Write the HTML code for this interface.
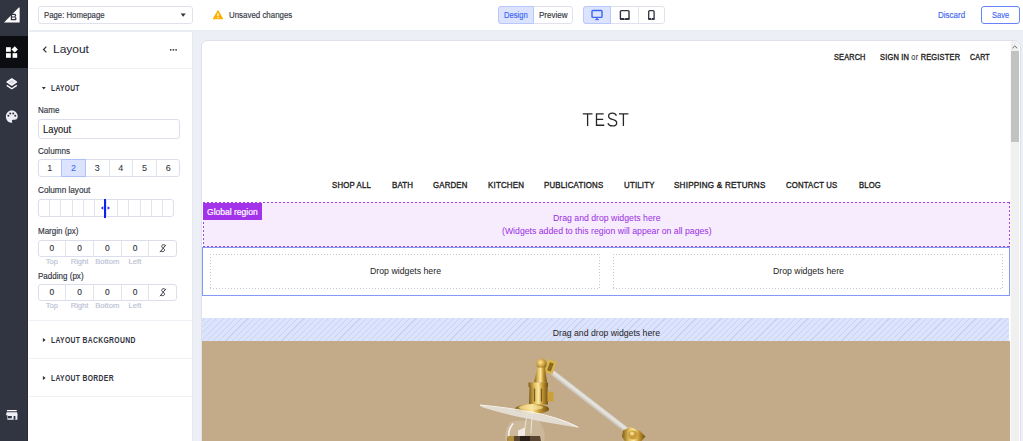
<!DOCTYPE html>
<html><head><meta charset="utf-8"><style>
*{box-sizing:border-box;margin:0;padding:0}
html,body{width:1023px;height:441px;overflow:hidden;background:#fff;font-family:"Liberation Sans",sans-serif;color:#313440}
.a{position:absolute}
.t{position:absolute;white-space:nowrap;line-height:1;transform-origin:0 0;-webkit-text-stroke:0.15px currentColor}
.sep{position:absolute;left:29px;width:163px;height:1px;background:#eff0f5}
.box{position:absolute;border:1px solid #dcdfeb;border-radius:3px;background:#fff}
</style></head><body>
<div class="a" style="left:0;top:0;width:28px;height:441px;background:#313441"></div>
<div class="a" style="left:0;top:36px;width:28px;height:32px;background:#0c0d11"></div>
<div class="a" style="left:26.5px;top:68px;width:1.5px;height:373px;background:#2a2c37"></div>
<div class="a" style="left:26.5px;top:0;width:1.5px;height:36px;background:#2a2c37"></div>
<svg class="a" style="left:0;top:0" width="28" height="36" viewBox="0 0 28 36">
<path d="M4 22.6 L18.8 7.6 L19.6 7.4 L19.6 22.6 Z" fill="#fff"/>
<path d="M10.8 13.8 L14.6 13.8 C16.4 13.8 16.7 16.4 15.3 16.9 C17.1 17.3 17 20.3 14.8 20.3 L10.8 20.3 Z M12.1 15 L12.1 16.4 L14.3 16.4 C15.2 16.4 15.2 15 14.3 15 Z M12.1 17.6 L12.1 19.1 L14.5 19.1 C15.5 19.1 15.5 17.6 14.5 17.6 Z" fill="#313441" fill-rule="evenodd"/></svg>
<svg class="a" style="left:0;top:36px" width="28" height="32" viewBox="0 0 28 32">
<rect x="6" y="11.2" width="4.8" height="4.6" fill="#fff"/>
<rect x="6" y="17.2" width="4.8" height="4.6" fill="#fff"/>
<rect x="12.6" y="17.2" width="4.6" height="4.6" fill="#fff"/>
<path d="M14.7 10.2 L17.9 13.4 L14.7 16.6 L11.5 13.4 Z" fill="#fff"/></svg>
<svg class="a" style="left:0;top:72px" width="28" height="24" viewBox="0 0 28 24">
<path d="M11.8 6.9 L16.6 10 L11.8 13.1 L7 10 Z" fill="#d8dbe6" stroke="#fff" stroke-width="1.3" stroke-linejoin="round"/>
<path d="M6.8 13.4 L11.8 16.7 L16.8 13.4" fill="none" stroke="#fff" stroke-width="1.3" stroke-linejoin="round"/></svg>
<svg class="a" style="left:0;top:104px" width="28" height="24" viewBox="0 0 28 24">
<path d="M11.8 6.5 C8.3 6.5 5.9 9.1 5.9 12.6 C5.9 16.3 8.6 18.8 11.2 18.8 C12.3 18.8 12.5 18.1 12.1 17.4 C11.6 16.6 12.1 15.8 13 15.8 L14.6 15.8 C16.5 15.8 17.7 14.7 17.7 12.6 C17.7 9.1 15.2 6.5 11.8 6.5 Z" fill="#eceef3"/>
<circle cx="8.4" cy="11.8" r="1" fill="#313441"/><circle cx="10.2" cy="9.4" r="1" fill="#313441"/>
<circle cx="13.2" cy="9.4" r="1" fill="#313441"/><circle cx="15.2" cy="11.8" r="1" fill="#313441"/></svg>
<svg class="a" style="left:0;top:404px" width="28" height="20" viewBox="0 0 28 20">
<rect x="6.8" y="5.9" width="10" height="1.4" rx="0.5" fill="#fff"/>
<path d="M6.6 8.2 L17 8.2 L17.8 11.2 L17.4 11.2 L17.4 15.7 L7.4 15.7 L7.4 11.2 L6 11.2 Z" fill="#eef0f5"/>
<rect x="7.9" y="12" width="3.9" height="2.3" fill="#313441"/>
<rect x="13.6" y="12" width="1.8" height="3.7" fill="#313441"/></svg>
<div class="a" style="left:29px;top:30px;width:994px;height:1.6px;background:#eaecf3"></div>
<div class="a" style="left:193px;top:31px;width:830px;height:410px;background:#edeff6"></div>
<div class="a" style="left:192px;top:31px;width:1px;height:410px;background:#e6e8f0"></div>
<div class="box" style="left:38px;top:6px;width:155px;height:17.5px;border-color:#dfe2ec"></div>
<svg class="a" style="left:180px;top:12.5px" width="7" height="5"><path d="M0.6 0.5 L5.8 0.5 L3.2 3.8 Z" fill="#313440"/></svg>
<svg class="a" style="left:212px;top:10px" width="12" height="10" viewBox="0 0 12 10"><path d="M6 0.9 L10.6 8.7 L1.4 8.7 Z" fill="#ffae00" stroke="#ffae00" stroke-width="1.1" stroke-linejoin="round"/><rect x="5.35" y="3.4" width="1.3" height="2.8" fill="#fff"/><rect x="5.35" y="7" width="1.3" height="1.1" fill="#fff"/></svg>
<div class="box" style="left:497.5px;top:6px;width:75.5px;height:17.5px;border-color:#dfe2ec"></div>
<div class="a" style="left:497.5px;top:6px;width:36.5px;height:17.5px;background:#dbe3fe;border:1px solid #b9c8fb;border-radius:3px 0 0 3px"></div>
<div class="box" style="left:583px;top:6px;width:82px;height:17.5px;border-color:#dfe2ec"></div>
<div class="a" style="left:583px;top:6px;width:28px;height:17.5px;background:#dbe3fe;border:1px solid #b9c8fb;border-radius:3px 0 0 3px"></div>
<div class="a" style="left:638px;top:7px;width:1px;height:15.5px;background:#e3e5ee"></div>
<svg class="a" style="left:590px;top:9px" width="14" height="12" viewBox="0 0 14 12"><rect x="2" y="1.5" width="10" height="6.9" rx="0.8" fill="none" stroke="#3c64f4" stroke-width="1.4"/><path d="M5.6 10.4 L7 8.6 L8.4 10.4 Z" fill="#3c64f4"/><rect x="5" y="10.2" width="4" height="0.9" fill="#3c64f4"/></svg>
<svg class="a" style="left:618px;top:9px" width="13" height="12" viewBox="0 0 13 12"><path d="M3.2 1.6 L10.2 1.6 Q11 1.6 11 2.4 L11 9.6 Q11 10.4 10.2 10.4 L3.2 10.4 Q2.4 10.4 2.4 9.6 L2.4 2.4 Q2.4 1.6 3.2 1.6 Z" fill="none" stroke="#313440" stroke-width="1.4"/><rect x="2" y="9" width="9.4" height="1.9" rx="0.6" fill="#313440"/><rect x="6.3" y="9.2" width="0.8" height="1.2" fill="#fff"/></svg>
<svg class="a" style="left:646px;top:9px" width="10" height="12" viewBox="0 0 10 12"><rect x="2.7" y="1.6" width="5.4" height="8.8" rx="1.1" fill="none" stroke="#313440" stroke-width="1.3"/><rect x="2.2" y="9" width="6.4" height="1.9" rx="0.6" fill="#313440"/><rect x="5" y="9.2" width="0.8" height="1.2" fill="#fff"/></svg>
<div class="a" style="left:980.5px;top:6px;width:39.5px;height:17.8px;border:1px solid #6484f8;border-radius:3px"></div>
<svg class="a" style="left:42px;top:46px" width="6" height="7" viewBox="0 0 6 7"><path d="M4.4 0.6 L1.5 3.5 L4.4 6.4" fill="none" stroke="#313440" stroke-width="1.25"/></svg>
<svg class="a" style="left:168px;top:47px" width="10" height="6"><circle cx="2.7" cy="2.8" r="0.9" fill="#313440"/><circle cx="5.4" cy="2.8" r="0.9" fill="#313440"/><circle cx="8.1" cy="2.8" r="0.9" fill="#313440"/></svg>
<div class="sep" style="top:68px"></div>
<svg class="a" style="left:41px;top:86px" width="6" height="5"><path d="M0.8 0.9 L4.8 0.9 L2.8 3.5 Z" fill="#313440"/></svg>
<div class="box" style="left:38px;top:119px;width:142px;height:20px"></div>
<div class="box" style="left:38px;top:159px;width:142px;height:18px"></div>
<div class="a" style="left:61.17px;top:160px;width:1px;height:16px;background:#e3e5ee"></div>
<div class="a" style="left:84.83px;top:160px;width:1px;height:16px;background:#e3e5ee"></div>
<div class="a" style="left:108.50px;top:160px;width:1px;height:16px;background:#e3e5ee"></div>
<div class="a" style="left:132.17px;top:160px;width:1px;height:16px;background:#e3e5ee"></div>
<div class="a" style="left:155.83px;top:160px;width:1px;height:16px;background:#e3e5ee"></div>
<div class="a" style="left:61.17px;top:159px;width:24.67px;height:18px;background:#dbe3fe;border:1px solid #b1c0f8"></div>
<div class="t" style="left:47.33px;top:164px;font-size:9px;color:#313440;-webkit-text-stroke:0.05px currentColor">1</div>
<div class="t" style="left:71.00px;top:164px;font-size:9px;color:#3c64f4;-webkit-text-stroke:0.05px currentColor">2</div>
<div class="t" style="left:94.67px;top:164px;font-size:9px;color:#313440;-webkit-text-stroke:0.05px currentColor">3</div>
<div class="t" style="left:118.33px;top:164px;font-size:9px;color:#313440;-webkit-text-stroke:0.05px currentColor">4</div>
<div class="t" style="left:142.00px;top:164px;font-size:9px;color:#313440;-webkit-text-stroke:0.05px currentColor">5</div>
<div class="t" style="left:165.67px;top:164px;font-size:9px;color:#313440;-webkit-text-stroke:0.05px currentColor">6</div>
<div class="box" style="left:38px;top:199px;width:136px;height:18px"></div>
<div class="a" style="left:48.83px;top:200px;width:1px;height:16px;background:#e3e5ee"></div>
<div class="a" style="left:60.17px;top:200px;width:1px;height:16px;background:#e3e5ee"></div>
<div class="a" style="left:71.50px;top:200px;width:1px;height:16px;background:#e3e5ee"></div>
<div class="a" style="left:82.83px;top:200px;width:1px;height:16px;background:#e3e5ee"></div>
<div class="a" style="left:94.17px;top:200px;width:1px;height:16px;background:#e3e5ee"></div>
<div class="a" style="left:105.50px;top:200px;width:1px;height:16px;background:#e3e5ee"></div>
<div class="a" style="left:116.83px;top:200px;width:1px;height:16px;background:#e3e5ee"></div>
<div class="a" style="left:128.17px;top:200px;width:1px;height:16px;background:#e3e5ee"></div>
<div class="a" style="left:139.50px;top:200px;width:1px;height:16px;background:#e3e5ee"></div>
<div class="a" style="left:150.83px;top:200px;width:1px;height:16px;background:#e3e5ee"></div>
<div class="a" style="left:162.17px;top:200px;width:1px;height:16px;background:#e3e5ee"></div>
<div class="a" style="left:104.4px;top:199px;width:1.8px;height:18.5px;background:#0b22f2"></div>
<svg class="a" style="left:100px;top:205px" width="12" height="6"><path d="M0.9 3 L3.3 1.3 L3.3 4.7 Z M10 3 L7.6 1.3 L7.6 4.7 Z" fill="#0a2cf0"/></svg>
<div class="box" style="left:38px;top:239.5px;width:138.5px;height:17.5px"></div>
<div class="a" style="left:65.20px;top:240.5px;width:1px;height:15.5px;background:#e3e5ee"></div>
<div class="a" style="left:92.90px;top:240.5px;width:1px;height:15.5px;background:#e3e5ee"></div>
<div class="a" style="left:120.60px;top:240.5px;width:1px;height:15.5px;background:#e3e5ee"></div>
<div class="a" style="left:148.30px;top:240.5px;width:1px;height:15.5px;background:#e3e5ee"></div>
<div class="t" style="left:49.55px;top:243.76px;font-size:8.4px;color:#313440">0</div>
<div class="t" style="left:77.25px;top:243.76px;font-size:8.4px;color:#313440">0</div>
<div class="t" style="left:104.95px;top:243.76px;font-size:8.4px;color:#313440">0</div>
<div class="t" style="left:132.65px;top:243.76px;font-size:8.4px;color:#313440">0</div>
<svg class="a" style="left:158.65px;top:244.1px" width="8" height="9" viewBox="0 0 8 9" fill="none" stroke="#313440" stroke-width="0.95"><path d="M6.2 1.6 C5.6 0.5 3.6 0.4 2.9 1.5 C2.3 2.5 3 3.5 4 4.1 C5.2 4.8 5.8 5.6 5.3 6.8 C4.7 8 2.8 8 2 7"/><path d="M0.9 8.2 L6.9 0.9"/></svg>
<div class="t" id="lb239.5_0" style="left:51.85px;top:258.18px;font-size:7.6px;color:#bcc2d6;transform:translateX(-50%)">Top</div>
<div class="t" id="lb239.5_1" style="left:79.55px;top:258.18px;font-size:7.6px;color:#bcc2d6;transform:translateX(-50%)">Right</div>
<div class="t" id="lb239.5_2" style="left:107.25px;top:258.18px;font-size:7.6px;color:#bcc2d6;transform:translateX(-50%)">Bottom</div>
<div class="t" id="lb239.5_3" style="left:134.95px;top:258.18px;font-size:7.6px;color:#bcc2d6;transform:translateX(-50%)">Left</div>
<div class="box" style="left:38px;top:283.6px;width:138.5px;height:17.5px"></div>
<div class="a" style="left:65.20px;top:284.6px;width:1px;height:15.5px;background:#e3e5ee"></div>
<div class="a" style="left:92.90px;top:284.6px;width:1px;height:15.5px;background:#e3e5ee"></div>
<div class="a" style="left:120.60px;top:284.6px;width:1px;height:15.5px;background:#e3e5ee"></div>
<div class="a" style="left:148.30px;top:284.6px;width:1px;height:15.5px;background:#e3e5ee"></div>
<div class="t" style="left:49.55px;top:287.86px;font-size:8.4px;color:#313440">0</div>
<div class="t" style="left:77.25px;top:287.86px;font-size:8.4px;color:#313440">0</div>
<div class="t" style="left:104.95px;top:287.86px;font-size:8.4px;color:#313440">0</div>
<div class="t" style="left:132.65px;top:287.86px;font-size:8.4px;color:#313440">0</div>
<svg class="a" style="left:158.65px;top:288.20000000000005px" width="8" height="9" viewBox="0 0 8 9" fill="none" stroke="#313440" stroke-width="0.95"><path d="M6.2 1.6 C5.6 0.5 3.6 0.4 2.9 1.5 C2.3 2.5 3 3.5 4 4.1 C5.2 4.8 5.8 5.6 5.3 6.8 C4.7 8 2.8 8 2 7"/><path d="M0.9 8.2 L6.9 0.9"/></svg>
<div class="t" id="lb283.6_0" style="left:51.85px;top:302.18px;font-size:7.6px;color:#bcc2d6;transform:translateX(-50%)">Top</div>
<div class="t" id="lb283.6_1" style="left:79.55px;top:302.18px;font-size:7.6px;color:#bcc2d6;transform:translateX(-50%)">Right</div>
<div class="t" id="lb283.6_2" style="left:107.25px;top:302.18px;font-size:7.6px;color:#bcc2d6;transform:translateX(-50%)">Bottom</div>
<div class="t" id="lb283.6_3" style="left:134.95px;top:302.18px;font-size:7.6px;color:#bcc2d6;transform:translateX(-50%)">Left</div>
<div class="sep" style="top:320px"></div>
<svg class="a" style="left:42px;top:337px" width="5" height="6"><path d="M0.9 0.9 L3.7 3 L0.9 5.1 Z" fill="#313440"/></svg>
<div class="sep" style="top:358px"></div>
<svg class="a" style="left:42px;top:375px" width="5" height="6"><path d="M0.9 0.9 L3.7 3 L0.9 5.1 Z" fill="#313440"/></svg>
<div class="sep" style="top:396px"></div>
<div class="a" style="left:202px;top:41px;width:817.5px;height:400px;background:#fff;border-radius:5px 6px 0 0;box-shadow:0 0 0 1px #dfe1ea"></div>
<div class="a" style="left:1010px;top:41px;width:9.3px;height:400px;background:#eff0ef;border-radius:0 6px 0 0;border-left:1px solid #fafafa"></div>
<svg class="a" style="left:1010px;top:43px" width="10" height="8"><path d="M2.4 5.2 L4.75 3 L7.1 5.2" fill="none" stroke="#6a6a6a" stroke-width="1"/></svg>
<div class="a" style="left:1010.8px;top:51px;width:8.2px;height:91px;background:#c2c2c2"></div>
<div class="a" style="left:202.5px;top:202px;width:807.5px;height:45px;background-color:#f6ecfd;background-image:repeating-linear-gradient(90deg,#a445e6 0 2px,transparent 2px 4px),repeating-linear-gradient(90deg,#a445e6 0 2px,transparent 2px 4px),repeating-linear-gradient(180deg,#a445e6 0 2px,transparent 2px 4px),repeating-linear-gradient(180deg,#a445e6 0 2px,transparent 2px 4px);background-size:100% 1px,100% 1px,1px 100%,1px 100%;background-position:0 0,0 100%,0 0,100% 0;background-repeat:no-repeat"></div>
<div class="a" style="left:202.5px;top:202.5px;width:59.5px;height:17.2px;background:#a233ea"></div>
<div class="a" style="left:202px;top:247px;width:808px;height:49px;border:1px solid #8399f3;background:#fff"></div>
<div class="a" style="left:210px;top:254px;width:390px;height:34.5px;background-color:transparent;background-image:repeating-linear-gradient(90deg,#c3c6d5 0 1.5px,transparent 1.5px 3.0px),repeating-linear-gradient(90deg,#c3c6d5 0 1.5px,transparent 1.5px 3.0px),repeating-linear-gradient(180deg,#c3c6d5 0 1.5px,transparent 1.5px 3.0px),repeating-linear-gradient(180deg,#c3c6d5 0 1.5px,transparent 1.5px 3.0px);background-size:100% 1px,100% 1px,1px 100%,1px 100%;background-position:0 0,0 100%,0 0,100% 0;background-repeat:no-repeat"></div>
<div class="a" style="left:612.5px;top:254px;width:390.5px;height:34.5px;background-color:transparent;background-image:repeating-linear-gradient(90deg,#c3c6d5 0 1.5px,transparent 1.5px 3.0px),repeating-linear-gradient(90deg,#c3c6d5 0 1.5px,transparent 1.5px 3.0px),repeating-linear-gradient(180deg,#c3c6d5 0 1.5px,transparent 1.5px 3.0px),repeating-linear-gradient(180deg,#c3c6d5 0 1.5px,transparent 1.5px 3.0px);background-size:100% 1px,100% 1px,1px 100%,1px 100%;background-position:0 0,0 100%,0 0,100% 0;background-repeat:no-repeat"></div>
<div class="a" style="left:202.4px;top:318px;width:807.1px;height:22.5px;background-color:#dce3fd;background-image:repeating-linear-gradient(-45deg, transparent 0 3.6px, #cad1f1 3.6px 4.4px)"></div>
<div class="a" style="left:202.4px;top:340.5px;width:807.6px;height:101px;background:#c3aa88;overflow:hidden"></div>
<svg class="a" style="left:203px;top:340.5px" width="807" height="101" viewBox="203 340.5 807 101">
<defs>
<linearGradient id="br" x1="0" x2="1" y1="0" y2="0"><stop offset="0" stop-color="#7d5c16"/><stop offset="0.3" stop-color="#e3bd5c"/><stop offset="0.5" stop-color="#fbe9a0"/><stop offset="0.72" stop-color="#c49530"/><stop offset="1" stop-color="#6e5012"/></linearGradient>
<radialGradient id="ball" cx="0.4" cy="0.35" r="0.7"><stop offset="0" stop-color="#fbe7a0"/><stop offset="0.5" stop-color="#d2a640"/><stop offset="1" stop-color="#7a5a18"/></radialGradient>
</defs>
<path d="M553 372.5 L626 429" stroke="#cdc9c0" stroke-width="5.4" stroke-linecap="round"/>
<path d="M552.6 371.5 L625.6 428" stroke="#e4e1db" stroke-width="3" stroke-linecap="round"/>
<g transform="rotate(20 550 366)"><path d="M545.5 359.5 L555 359.5 L555 373 L545.5 373 Z" fill="#d9b453"/><path d="M548.5 362 L552.5 362 L552.5 370.5 L548.5 370.5 Z" fill="#8a6a1e"/></g>
<circle cx="541.5" cy="363.5" r="5.2" fill="url(#ball)"/>
<path d="M537.5 367 L545 367 L547 382 L534 382 Z" fill="url(#br)"/>
<path d="M528.5 382 L548 382 L548 386.5 L528.5 386.5 Z" fill="url(#br)"/>
<path d="M529.5 386 L547.5 386 L548 404 L529 404 Z" fill="url(#br)"/>
<path d="M534.5 388 L534.5 401 M541.5 388 L541.5 401" stroke="#5a4210" stroke-width="1.3" opacity="0.75"/>
<path d="M547.5 391 L553.5 391.5 L553.5 401 L547.5 401 Z" fill="#c9a03a"/>
<ellipse cx="532" cy="408.5" rx="17" ry="5" fill="url(#br)"/>
<ellipse cx="531" cy="407" rx="12" ry="2.4" fill="#f7e3a0" opacity="0.7"/>
<path d="M511 421 C505 428 504 436 506 441 L544 441 C546 434 544 426 538 419 Z" fill="#d8ccb6" opacity="0.45"/>
<path d="M513 423 C509 428 508 433 509 438" stroke="#fff" stroke-width="1.6" fill="none" opacity="0.85"/>
<path d="M518 430 L525 427 L525 435 L518 437 Z" fill="#fff" opacity="0.7"/>
<path d="M527 414 L524 433 M532 414 L531 433" stroke="#f2f0ec" stroke-width="0.8"/>
<path d="M508 435.5 L540 435.5 L541 441 L507 441 Z" fill="#5a4630"/>
<path d="M508 435.5 L514 435.5 L514 441 L507 441 Z" fill="#b08c3c"/>
<path d="M520 435.5 L530 435.5 L530 441 L520 441 Z" fill="#2a2018"/>
<path d="M480 404.5 C512 408 556 414 580 427.5 C556 423 512 417 481 406.2 Z" fill="#e9e5dd" opacity="0.85"/>
<path d="M480 404.5 C512 407.6 552 412.6 578 426.6" stroke="#fbfaf7" stroke-width="0.9" fill="none"/>
<path d="M623 430 L630 426.5 L640 430.5 L645.5 436 L641 441 L625 441 L622 436 Z" fill="url(#br)"/>
<circle cx="633" cy="434.5" r="4.6" fill="#c99d3a"/>
<circle cx="632" cy="433" r="2" fill="#f0d98a"/>
</svg>
<svg class="a" style="left:578px;top:108px" width="56" height="24" viewBox="578 108 56 24" fill="none" stroke="#262626" stroke-width="1.3">
<path d="M582.8 113.9 L592.5 113.9 M587.6 113.9 L587.6 125.9"/>
<path d="M603.7 113.9 L596.5 113.9 L596.5 125.25 L604.3 125.25 M596.5 119.4 L603.2 119.4"/>
<path d="M616.4 115.8 C615.8 114.1 614.2 113.2 612.3 113.2 C610 113.2 608.6 114.5 608.6 116.3 C608.6 118.2 610.2 118.9 612.4 119.4 C615 120 616.7 120.9 616.7 122.9 C616.7 124.8 615 125.9 612.3 125.9 C610.2 125.9 608.5 124.9 607.9 123.2"/>
<path d="M619 113.9 L628.4 113.9 M623.4 113.9 L623.4 125.9"/>
</svg>
<div class="t" id="pg" style="left:44.00px;top:11px;font-size:9.2px;color:#313440;transform:scaleX(0.8472);">Page: Homepage</div>
<div class="t" id="uns" style="left:229.30px;top:11px;font-size:9.2px;color:#313440;transform:scaleX(0.8608);">Unsaved changes</div>
<div class="t" id="des" style="left:504.00px;top:11px;font-size:9.2px;color:#3c64f4;transform:scaleX(0.8276);">Design</div>
<div class="t" id="pre" style="left:538.70px;top:11px;font-size:9.2px;color:#313440;transform:scaleX(0.8758);">Preview</div>
<div class="t" id="dis" style="left:938.00px;top:11px;font-size:9.2px;color:#3c64f4;transform:scaleX(0.8710);">Discard</div>
<div class="t" id="sav" style="left:991.70px;top:11px;font-size:9.2px;color:#3c64f4;transform:scaleX(0.8143);">Save</div>
<div class="t" id="ttl" style="left:52.95px;top:44px;font-size:11.4px;color:#272a36;-webkit-text-stroke:0.05px currentColor;transform:scaleX(1.0485);">Layout</div>
<div class="t" id="h1" style="left:50.80px;top:84px;font-size:8.4px;color:#313440;font-weight:bold;-webkit-text-stroke:0;letter-spacing:0.4px;transform:scaleX(0.7972);">LAYOUT</div>
<div class="t" id="nm" style="left:38.20px;top:106px;font-size:8.4px;color:#313440;transform:scaleX(0.9545);">Name</div>
<div class="t" id="inp" style="left:43.40px;top:125px;font-size:10.2px;color:#1a1c24;transform:scaleX(0.9194);">Layout</div>
<div class="t" id="col" style="left:38.20px;top:147px;font-size:8.4px;color:#313440;transform:scaleX(0.9667);">Columns</div>
<div class="t" id="cll" style="left:38.20px;top:186px;font-size:8.4px;color:#313440;transform:scaleX(0.9778);">Column layout</div>
<div class="t" id="mg" style="left:38.20px;top:227px;font-size:8.4px;color:#313440;transform:scaleX(0.9548);">Margin (px)</div>
<div class="t" id="pd" style="left:38.20px;top:272px;font-size:8.4px;color:#313440;transform:scaleX(0.9596);">Padding (px)</div>
<div class="t" id="h2" style="left:50.50px;top:336px;font-size:8.4px;color:#313440;font-weight:bold;-webkit-text-stroke:0;letter-spacing:0.4px;transform:scaleX(0.8125);">LAYOUT BACKGROUND</div>
<div class="t" id="h3" style="left:50.50px;top:374px;font-size:8.4px;color:#313440;font-weight:bold;-webkit-text-stroke:0;letter-spacing:0.4px;transform:scaleX(0.8117);">LAYOUT BORDER</div>
<div class="t" id="srch" style="left:834.30px;top:54px;font-size:8.2px;color:#222;-webkit-text-stroke:0.35px currentColor;letter-spacing:0.2px;transform:scaleX(0.8943);">SEARCH</div>
<div class="t" id="sign" style="left:880.00px;top:54px;font-size:8.2px;color:#222;-webkit-text-stroke:0.35px currentColor;letter-spacing:0.2px;transform:scaleX(0.9125);">SIGN IN <span style="-webkit-text-stroke:0">or</span> REGISTER</div>
<div class="t" id="cart" style="left:970.20px;top:54px;font-size:8.2px;color:#222;-webkit-text-stroke:0.35px currentColor;letter-spacing:0.2px;transform:scaleX(0.8609);">CART</div>
<div class="t" id="nav0" style="left:332.30px;top:181px;font-size:8.6px;color:#222;-webkit-text-stroke:0.35px currentColor;letter-spacing:0.2px;transform:scaleX(0.9070);">SHOP ALL</div>
<div class="t" id="nav1" style="left:391.80px;top:181px;font-size:8.6px;color:#222;-webkit-text-stroke:0.35px currentColor;letter-spacing:0.2px;transform:scaleX(0.9217);">BATH</div>
<div class="t" id="nav2" style="left:432.90px;top:181px;font-size:8.6px;color:#222;-webkit-text-stroke:0.35px currentColor;letter-spacing:0.2px;transform:scaleX(0.9105);">GARDEN</div>
<div class="t" id="nav3" style="left:487.70px;top:181px;font-size:8.6px;color:#222;-webkit-text-stroke:0.35px currentColor;letter-spacing:0.2px;transform:scaleX(0.9256);">KITCHEN</div>
<div class="t" id="nav4" style="left:544.30px;top:181px;font-size:8.6px;color:#222;-webkit-text-stroke:0.35px currentColor;letter-spacing:0.2px;transform:scaleX(0.9169);">PUBLICATIONS</div>
<div class="t" id="nav5" style="left:624.00px;top:181px;font-size:8.6px;color:#222;-webkit-text-stroke:0.35px currentColor;letter-spacing:0.2px;transform:scaleX(0.9182);">UTILITY</div>
<div class="t" id="nav6" style="left:674.20px;top:181px;font-size:8.6px;color:#222;-webkit-text-stroke:0.35px currentColor;letter-spacing:0.2px;transform:scaleX(0.9464);">SHIPPING &amp; RETURNS</div>
<div class="t" id="nav7" style="left:786.20px;top:181px;font-size:8.6px;color:#222;-webkit-text-stroke:0.35px currentColor;letter-spacing:0.2px;transform:scaleX(0.9000);">CONTACT US</div>
<div class="t" id="nav8" style="left:858.70px;top:181px;font-size:8.6px;color:#222;-webkit-text-stroke:0.35px currentColor;letter-spacing:0.2px;transform:scaleX(0.8875);">BLOG</div>
<div class="t" id="glob" style="left:207.00px;top:208px;font-size:8.7px;color:#fff;-webkit-text-stroke:0.2px currentColor;transform:scaleX(0.9808);">Global region</div>
<div class="t" id="dd1" style="left:552.80px;top:214px;font-size:8.7px;color:#9a2de4;-webkit-text-stroke:0;transform:scaleX(1.0028);">Drag and drop widgets here</div>
<div class="t" id="dd2" style="left:501.50px;top:227px;font-size:8.7px;color:#9a2de4;-webkit-text-stroke:0;transform:scaleX(1.0024);">(Widgets added to this region will appear on all pages)</div>
<div class="t" id="dw1" style="left:369.60px;top:267px;font-size:8.7px;color:#242424;-webkit-text-stroke:0;transform:scaleX(1.0071);">Drop widgets here</div>
<div class="t" id="dw2" style="left:772.60px;top:267px;font-size:8.7px;color:#242424;-webkit-text-stroke:0;transform:scaleX(1.0057);">Drop widgets here</div>
<div class="t" id="dd3" style="left:552.80px;top:329px;font-size:8.7px;color:#242424;-webkit-text-stroke:0;transform:scaleX(1.0000);">Drag and drop widgets here</div>
</body></html>
